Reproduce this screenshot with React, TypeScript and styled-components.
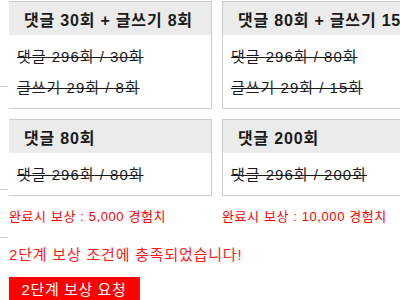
import styled, { createGlobalStyle } from "styled-components"

const GlobalStyle = createGlobalStyle`
    html, body {
        margin: 0;
        padding: 0;
        background: #fff;
    }
    body {
        font-family: "Liberation Sans", "Noto Sans CJK KR", sans-serif;
    }
`

const Page = styled.div`
    width: 400px;
    height: 300px;
    overflow: hidden;
    display: flex;
`
// little grey ticks peeking in from the left edge
const Gutter = styled.div`
    width: 9px;
    flex: none;
    display: flex;
    flex-direction: column;
`
const Tick = styled.div<{ $top: number }>`
    height: 1px;
    width: 8px;
    background: #d0d0d0;
    margin-top: ${p => p.$top}px;
`
const Main = styled.div`
    flex: none;
    display: flex;
    flex-direction: column;
    padding-top: 1px;
`
const Grid = styled.div`
    display: grid;
    grid-template-columns: 203px 204px;
    column-gap: 10px;
    row-gap: 10px;
    align-items: start;
`
const Card = styled.div<{ $first?: boolean }>`
    border: solid 1px #cccccc;
    border-left: ${p => (p.$first ? "none" : "solid 1px #cccccc")};
    background: #fff;
`
const CardHead = styled.div`
    height: 33px;
    background: #ebebeb;
    display: flex;
    align-items: center;
    padding-left: 15px;
    font-size: 16px;
    font-weight: bold;
    letter-spacing: 0.8px;
    color: #1a1a1a;
    white-space: nowrap;
    overflow: hidden;
`
const CardBody = styled.div`
    padding: 6px 0 5px 8px;
`
const Row = styled.div`
    height: 31px;
    line-height: 31px;
    font-size: 15px;
    letter-spacing: 1px;
    color: #1a1a1a;
    text-decoration: line-through;
    white-space: nowrap;
`
const Reward = styled.div`
    font-size: 13px;
    letter-spacing: 0.6px;
    color: #ff0000;
    line-height: 19px;
    margin-top: 1px;
    white-space: nowrap;
`
const Notice = styled.div`
    font-size: 15px;
    letter-spacing: 0.8px;
    color: #ff1a1a;
    line-height: 22px;
    margin-top: 18px;
    white-space: nowrap;
`
const RequestButton = styled.button`
    margin-top: 11px;
    align-self: flex-start;
    width: 131px;
    height: 36px;
    background: #ff0000;
    color: #fff;
    border: none;
    border-right: solid 1px #c83030;
    font-family: inherit;
    font-size: 15px;
    letter-spacing: 0.6px;
    padding: 0;
    cursor: pointer;
`

type Mission = {
    title: string
    rows: string[]
}

const missions: Mission[] = [
    { title: "댓글 30회 + 글쓰기 8회", rows: ["댓글 296회 / 30회", "글쓰기 29회 / 8회"] },
    { title: "댓글 80회 + 글쓰기 15회", rows: ["댓글 296회 / 80회", "글쓰기 29회 / 15회"] },
    { title: "댓글 80회", rows: ["댓글 296회 / 80회"] },
    { title: "댓글 200회", rows: ["댓글 296회 / 200회"] },
]

function App() {
    return (
        <Page>
            <GlobalStyle />
            <Gutter>
                <Tick $top={86} />
                <Tick $top={102} />
                <Tick $top={47} />
            </Gutter>
            <Main>
                <Grid>
                    {missions.map((m, i) => (
                        <Card key={m.title} $first={i % 2 === 0}>
                            <CardHead>{m.title}</CardHead>
                            <CardBody>
                                {m.rows.map(r => <Row key={r}>{r}</Row>)}
                            </CardBody>
                        </Card>
                    ))}
                    <Reward>완료시 보상 : 5,000 경험치</Reward>
                    <Reward>완료시 보상 : 10,000 경험치</Reward>
                </Grid>
                <Notice>2단계 보상 조건에 충족되었습니다!</Notice>
                <RequestButton>2단계 보상 요청</RequestButton>
            </Main>
        </Page>
    )
}
export default App
